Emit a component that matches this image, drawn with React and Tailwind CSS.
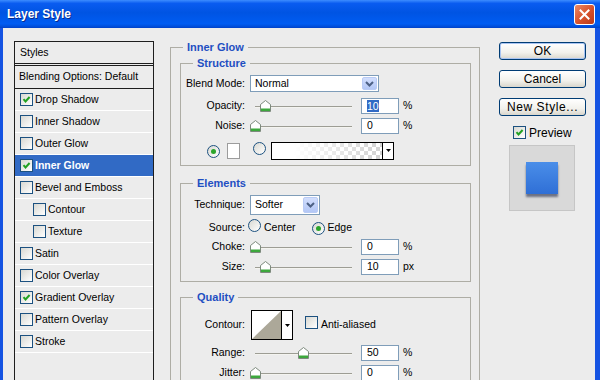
import React from "react";

const styleRows = [
  { label: "Drop Shadow", checked: true },
  { label: "Inner Shadow" },
  { label: "Outer Glow" },
  { label: "Inner Glow", checked: true, active: true },
  { label: "Bevel and Emboss" },
  { label: "Contour", indent: true },
  { label: "Texture", indent: true },
  { label: "Satin" },
  { label: "Color Overlay" },
  { label: "Gradient Overlay", checked: true },
  { label: "Pattern Overlay" },
  { label: "Stroke" },
];

function CheckBox({ checked }) {
  return (
    <span className="relative inline-block w-[13px] h-[13px] shrink-0 border border-[#1c5180] bg-[linear-gradient(135deg,#d8d8d2,#ffffff)]">
      {checked && (
        <svg viewBox="0 0 11 11" className="absolute inset-0 w-[11px] h-[11px]">
          <path d="M2.5 5.2 L4.5 7.4 L8.6 3" fill="none" stroke="#21a121" strokeWidth="2" />
        </svg>
      )}
    </span>
  );
}

function Radio({ checked }) {
  return (
    <span className="inline-flex items-center justify-center w-[13px] h-[13px] shrink-0 rounded-full border border-[#1c5180] bg-[linear-gradient(135deg,#d8d8d2,#ffffff)]">
      {checked && <span className="w-[5px] h-[5px] rounded-full bg-[#2aa52a]" />}
    </span>
  );
}

function Chevron() {
  return (
    <svg width="9" height="6" viewBox="0 0 9 6">
      <path d="M1 1 L4.5 4.5 L8 1" fill="none" stroke="#4d6185" strokeWidth="2" />
    </svg>
  );
}

function Combo({ value, size }) {
  return (
    <div className={`flex items-stretch border border-[#7f9db9] bg-white p-[1px] ${size}`}>
      <span className="flex-1 flex items-center pl-[3px]">{value}</span>
      <span className="w-[15px] flex items-center justify-center rounded-[2px] border border-[#b9cbf5] bg-[linear-gradient(#d2defd,#b3c7f6)]">
        <Chevron />
      </span>
    </div>
  );
}

function DownArrow() {
  return (
    <svg width="5" height="3" viewBox="0 0 5 3">
      <path d="M0 0 H5 L2.5 3 Z" fill="#000" />
    </svg>
  );
}

function Slider({ at }) {
  return (
    <div className="relative w-[103px] h-[16px] shrink-0">
      <div className="absolute left-[5px] right-[1px] top-[8px] h-[2px] border-t border-[#9d9d94] bg-[#f4f4f0]" />
      <svg
        className="absolute top-[2px]"
        style={{ left: at - 5.5 }}
        width="11"
        height="12"
        viewBox="0 0 11 12"
      >
        <path d="M0.5 4.5 L5.5 0.5 L10.5 4.5 V11.5 H0.5 Z" fill="#fff" stroke="#7d8a7d" />
        <rect x="1" y="8.5" width="9" height="2.5" fill="#3da83d" />
      </svg>
    </div>
  );
}

function NumBox({ value, selected }) {
  return (
    <div className="w-[38px] h-[16px] shrink-0 border border-[#7f9db9] bg-white flex items-center pl-[5px]">
      {selected ? (
        <span className="bg-[#316ac5] text-white leading-[12px]">{value}</span>
      ) : (
        value
      )}
    </div>
  );
}

function Label({ children }) {
  return <div className="w-[64px] shrink-0 text-right">{children}</div>;
}

function SliderRow({ label, at, value, unit, selected, gap }) {
  return (
    <div className={`flex items-center h-[16px] ${gap}`}>
      <Label>{label}</Label>
      <div className="ml-[5px]">
        <Slider at={at} />
      </div>
      <div className="ml-[8px]">
        <NumBox value={value} selected={selected} />
      </div>
      <span className="ml-[4px]">{unit}</span>
    </div>
  );
}

function Group({ title, className = "", children }) {
  return (
    <fieldset className={`border border-[#aeada5] ${className}`}>
      <legend className="ml-[12px] px-[4px] text-[11px] leading-[12px] font-bold text-[#1f4fc2]">
        {title}
      </legend>
      {children}
    </fieldset>
  );
}

function StylesList() {
  return (
    <div className="w-[140px] h-[360px] shrink-0 border border-[#1e1e1e] text-[10.5px]">
      <div className="h-[24px] flex items-center pl-[5px] border-b-[3px] border-double border-[#1e1e1e]">
        Styles
      </div>
      <div className="h-[23px] flex items-center pl-[4px] border-b border-[#1e1e1e]">
        Blending Options: Default
      </div>
      {styleRows.map((r) => (
        <div
          key={r.label}
          className={`h-[22px] flex items-center border-b border-white ${
            r.indent ? "pl-[18px]" : "pl-[5px]"
          } ${r.active ? "bg-[#316ac5] text-white font-bold" : ""}`}
        >
          <CheckBox checked={r.checked} />
          <span className="ml-[2px]">{r.label}</span>
        </div>
      ))}
    </div>
  );
}

function Main() {
  return (
    <Group title="Inner Glow" className="w-[310px] h-[360px] shrink-0 ml-[16px]">
      <div className="pl-[9px] pr-[8px] text-[10.5px]">
        <Group title="Structure" className="mt-[4px]">
          <div className="pb-[6px]">
            <div className="flex items-center h-[17px] mt-[6px]">
              <Label>Blend Mode:</Label>
              <div className="ml-[5px]">
                <Combo value="Normal" size="w-[129px] h-[17px]" />
              </div>
            </div>
            <SliderRow label="Opacity:" at={15} value="10" unit="%" selected gap="mt-[6px]" />
            <SliderRow label="Noise:" at={5} value="0" unit="%" gap="mt-[4px]" />
            <div className="flex items-center h-[17px] mt-[8px]">
              <div className="ml-[26px]">
                <Radio checked />
              </div>
              <div className="ml-[7px] w-[13px] h-[16px] border border-[#9c9c9c] bg-white" />
              <div className="ml-[13px]">
                <Radio />
              </div>
              <div className="ml-[5px] flex w-[123px] h-[18px] border border-black">
                <div className="flex-1 bg-[image:linear-gradient(to_right,#fff_20%,rgba(255,255,255,0)_95%),repeating-conic-gradient(#d4d4d4_0_25%,#fff_0_50%)] bg-[length:100%_100%,8px_8px]" />
                <div className="w-[11px] border-l border-black bg-white flex items-center justify-center">
                  <DownArrow />
                </div>
              </div>
            </div>
          </div>
        </Group>

        <Group title="Elements" className="mt-[11px]">
          <div className="pb-[6px]">
            <div className="flex items-center h-[20px] mt-[6px]">
              <Label>Technique:</Label>
              <div className="ml-[5px]">
                <Combo value="Softer" size="w-[70px] h-[20px]" />
              </div>
            </div>
            <div className="flex items-center h-[16px] mt-[5px]">
              <Label>Source:</Label>
              <div className="ml-[3px]">
                <Radio />
              </div>
              <span className="ml-[3px]">Center</span>
              <div className="ml-[16px]">
                <Radio checked />
              </div>
              <span className="ml-[3px]">Edge</span>
            </div>
            <SliderRow label="Choke:" at={5} value="0" unit="%" gap="mt-[3px]" />
            <SliderRow label="Size:" at={15} value="10" unit="px" gap="mt-[4px]" />
          </div>
        </Group>

        <Group title="Quality" className="mt-[9px]">
          <div className="pb-[6px]">
            <div className="flex items-center h-[30px] mt-[7px]">
              <Label>Contour:</Label>
              <div className="ml-[6px] flex w-[42px] h-[30px] border border-black bg-white">
                <svg className="flex-1 h-full" viewBox="0 0 29 28" preserveAspectRatio="none">
                  <path d="M0 28 L29 0 V28 Z" fill="#aca899" />
                </svg>
                <div className="w-[11px] border-l border-black flex items-center justify-center">
                  <DownArrow />
                </div>
              </div>
              <div className="ml-[12px]">
                <CheckBox />
              </div>
              <span className="ml-[3px]">Anti-aliased</span>
            </div>
            <SliderRow label="Range:" at={53} value="50" unit="%" gap="mt-[5px]" />
            <SliderRow label="Jitter:" at={5} value="0" unit="%" gap="mt-[4px]" />
          </div>
        </Group>
      </div>
    </Group>
  );
}

function XpButton({ children, focused }) {
  return (
    <div
      className={`w-[87px] h-[18px] flex items-center justify-center rounded-[3px] border border-[#003c74] bg-[linear-gradient(#ffffff,#f2f1ec_60%,#d9d6cc)] ${
        focused ? "shadow-[inset_0_0_0_1px_#a9c4f2]" : ""
      }`}
    >
      {children}
    </div>
  );
}

function RightColumn() {
  return (
    <div className="ml-[19px] w-[87px] shrink-0 flex flex-col pt-[1px] text-[12px]">
      <XpButton focused>OK</XpButton>
      <div className="mt-[10px]">
        <XpButton>Cancel</XpButton>
      </div>
      <div className="mt-[10px]">
        <XpButton>
          <span className="tracking-[0.6px]">New Style...</span>
        </XpButton>
      </div>
      <div className="mt-[10px] ml-[14px] flex items-center h-[13px]">
        <CheckBox checked />
        <span className="ml-[3px]">Preview</span>
      </div>
      <div className="mt-[6px] ml-[10px] w-[66px] h-[66px] border border-[#c6c6c6] bg-[#d9d9d9] flex items-center justify-center">
        <div className="w-[32px] h-[32px] bg-[linear-gradient(#4a8ee9,#2f6fd6)] shadow-[0_3px_2px_rgba(20,30,60,0.55)]" />
      </div>
    </div>
  );
}

export default function App() {
  return (
    <div className="w-[600px] h-[380px] overflow-hidden flex flex-col bg-[#1553e2] font-['Liberation_Sans',Arial,sans-serif] text-black">
      <div className="h-[28px] shrink-0 flex items-center pl-[7px] pr-[5px] bg-[linear-gradient(#3d8dff_0%,#0a5cf0_12%,#0054e3_45%,#005cf2_85%,#004fdc_94%,#0041c8_100%)]">
        <span className="text-white font-bold text-[12px] [text-shadow:1px_1px_#0b2a8a]">
          Layer Style
        </span>
        <div className="ml-auto w-[21px] h-[21px] rounded-[3px] border border-white bg-[linear-gradient(135deg,#ea8a66,#d6502a_55%,#b9391a)] flex items-center justify-center">
          <svg width="11" height="11" viewBox="0 0 11 11">
            <path d="M1.5 1.5 L9.5 9.5 M9.5 1.5 L1.5 9.5" stroke="#fff" strokeWidth="2" strokeLinecap="square" />
          </svg>
        </div>
      </div>
      <div className="flex-1 min-h-0 flex ml-[3px] mr-[5px] bg-[#ececec] pt-[13px] pl-[11px] overflow-hidden">
        <StylesList />
        <Main />
        <RightColumn />
      </div>
    </div>
  );
}
